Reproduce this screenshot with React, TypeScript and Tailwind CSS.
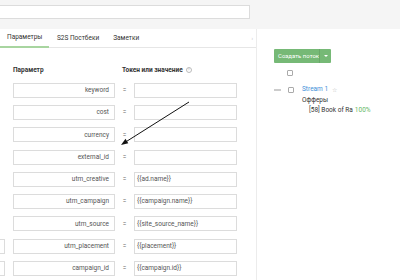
import React from "react";

const rows: { p: string; v: string; side?: boolean }[] = [
  { p: "keyword", v: "" },
  { p: "cost", v: "" },
  { p: "currency", v: "" },
  { p: "external_id", v: "" },
  { p: "utm_creative", v: "{{ad.name}}" },
  { p: "utm_campaign", v: "{{campaign.name}}" },
  { p: "utm_source", v: "{{site_source_name}}" },
  { p: "utm_placement", v: "{{placement}}", side: true },
  { p: "campaign_id", v: "{{campaign.id}}", side: true },
];

export default function App() {
  return (
    <div
      className="relative w-[400px] h-[280px] overflow-hidden bg-white text-[6.5px] leading-none text-[#333]"
      style={{ fontFamily: "Roboto, 'Liberation Sans', sans-serif" }}
    >
      {/* top band */}
      <div className="h-[29px] bg-[#f5f5f5] pt-[5px]">
        <div className="ml-[-2px] w-[252px] h-[14px] bg-white border border-[#dcdcdc]" />
      </div>

      <div className="flex h-[251px]">
        {/* left panel */}
        <div className="w-[257px] border-r border-[#ececec] flex flex-col">
          <div className="relative h-[19px] border-b border-[#e6e6e6] flex items-stretch text-[#333]">
            <div className="w-[49px] pl-[7px] flex items-center border-b-2 border-[#a8d5a0] mb-[-1px]">
              Параметры
            </div>
            <div className="pl-[8px] flex items-center">S2S Постбеки</div>
            <div className="pl-[14px] flex items-center">Заметки</div>
            <div className="ml-auto mr-[3px] flex items-center text-[#bbb] text-[5px]">›</div>
          </div>

          <div className="flex items-center h-[8px] mt-[18px] font-bold text-[#333]">
            <div className="w-[121px] pl-[13px]">Параметр</div>
            <div className="flex items-center gap-[3px] pl-[1px]">
              Токен или значение
              <span className="w-[6px] h-[6px] rounded-full border border-[#bbb] text-[#bbb] text-[4px] font-normal flex items-center justify-center">
                ?
              </span>
            </div>
          </div>

          <div className="flex flex-col gap-[7.3px] mt-[8.7px]">
            {rows.map((r) => (
              <div key={r.p} className="flex items-center h-[15px]">
                <div
                  className={`w-[20px] h-[15px] ml-[-15px] border ${
                    r.side ? "border-[#dcdcdc]" : "border-transparent"
                  }`}
                />
                <div className="ml-[8px] w-[102px] h-[15px] border border-[#dcdcdc] flex items-center justify-end pr-[5px] text-[#555]">
                  {r.p}
                </div>
                <div className="w-[19px] text-center text-[#666]">=</div>
                <div className="w-[103px] h-[15px] border border-[#dcdcdc] flex items-center pl-[2px] text-[#555]">
                  {r.v}
                </div>
              </div>
            ))}
          </div>
        </div>

        {/* right panel */}
        <div className="flex-1 flex flex-col">
          <div className="mt-[20px] ml-[17px] w-[57px] h-[14px] bg-[#76b976] rounded-[1px] flex items-center text-white text-[6px] whitespace-nowrap">
            <span className="pl-[4px] flex-1">Создать поток</span>
            <span className="w-[12px] h-full border-l border-[#6aa86a] flex items-center justify-center">
              <span className="w-0 h-0 border-l-[2px] border-r-[2px] border-t-[2px] border-l-transparent border-r-transparent border-t-white" />
            </span>
          </div>
          <div className="mt-[7px] ml-[30px] w-[6px] h-[6px] border border-[#aaa] rounded-[1px] bg-white" />
          <div className="mt-[10px] flex items-center h-[7px]">
            <div className="ml-[17px] w-[7px] h-[2px] border-t border-b border-[#ccc]" />
            <div className="ml-[7px] w-[6px] h-[6px] border border-[#aaa] rounded-[1px] bg-white" />
            <span className="ml-[8px] text-[#3d8fd8]">Stream 1</span>
            <span className="ml-[4px] text-[#bbb] text-[6px]">☆</span>
          </div>
          <div className="mt-[4px] ml-[45px] h-[7px] flex items-center text-[#333]">Офферы</div>
          <div className="mt-[3px] ml-[52px] h-[7px] flex items-center text-[#333] whitespace-nowrap">
            <span>[58] Book of Ra</span>
            <span className="ml-[2px] text-[#66b866]">100%</span>
          </div>
        </div>
      </div>

      {/* annotation arrow */}
      <svg className="absolute left-0 top-0 pointer-events-none" width="400" height="280">
        <line x1="189" y1="102" x2="124" y2="143" stroke="#111" strokeWidth="1" />
        <polygon points="121,145 125.5,138.8 128.3,143.2" fill="#111" />
      </svg>
    </div>
  );
}
